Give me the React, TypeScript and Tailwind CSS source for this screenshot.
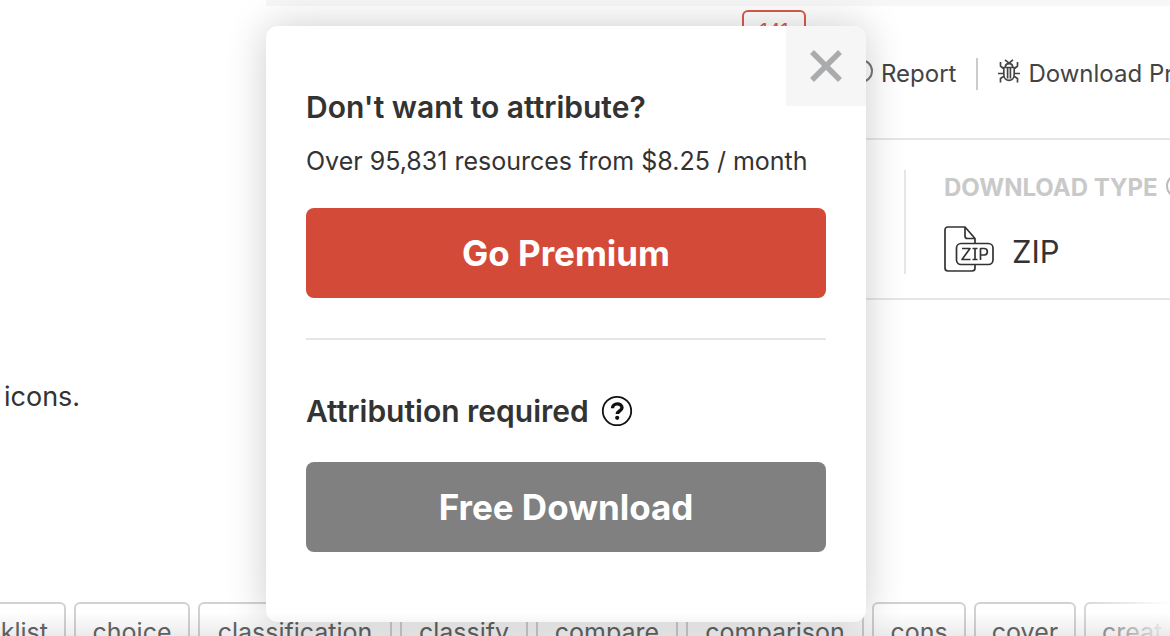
import React from "react";

const tags = [
  { label: "klist", box: "w-[66px] border-l-0 rounded-r-md justify-end pr-4" },
  { label: "choice", box: "w-[116px] rounded-md justify-center" },
  { label: "classification", box: "w-[194px] rounded-md justify-center" },
  { label: "classify", box: "w-[128px] rounded-md justify-center" },
  { label: "compare", box: "w-[142px] rounded-md justify-center" },
  { label: "comparison", box: "w-[178px] rounded-md justify-center" },
  { label: "cons", box: "w-[94px] rounded-md justify-center" },
  { label: "cover", box: "w-[102px] rounded-md justify-center" },
  { label: "creat", box: "w-[120px] rounded-md pl-4" },
];

function BugIcon() {
  return (
    <svg className="mb-1.5" width="22" height="24" viewBox="0 0 22 24" fill="none" stroke="#444" strokeWidth="1.700" strokeLinejoin="round" aria-hidden="true">
      <path d="M7 .8l4 3.400 4-3.400M7.300 8c0-4.500 7.400-4.500 7.400 0M5.800 8.500h10.400v6.700c0 8.300-10.400 8.300-10.400 0zM9.600 9v10.500M12.400 9v10.500M2.500 3v4l3.500 3M19.500 3v4L16 10M0 14.500h5.800M16.200 14.500H22M2.500 23.500v-4L6.300 17M19.500 23.500v-4L15.700 17" />
    </svg>
  );
}

function ZipIcon() {
  return (
    <svg width="50" height="46" viewBox="0 0 50 46" fill="none" stroke="#333" strokeWidth="1.7" strokeLinejoin="round" aria-hidden="true">
      <path d="M31 17v-4.500L21 1H4Q1 1 1 4v38q0 3 3 3h24q3 0 3-3v-3" />
      <path d="M21 1v9q0 2.500 2.500 2.500H31" />
      <rect x="12.500" y="17.500" width="36.500" height="21" rx="4.500" />
      <path d="M18 22.500h8L18 33.500h8.500M28.500 22.500h5M31 22.500v11M28.500 33.500h5M36.500 34V22.500h3.500c4.500 0 4.500 6.500 0 6.500h-3.500" />
    </svg>
  );
}

function HelpIcon() {
  return (
    <svg width="32" height="32" viewBox="0 0 32 32" fill="none" stroke="#111" aria-hidden="true">
      <circle cx="16" cy="16" r="14.200" strokeWidth="1.800" />
      <path d="M11.500 13.200c0-5.700 9.500-5.700 9.500-.4 0 3.200-4.700 3.200-4.700 6.200" strokeWidth="3.400" />
      <circle cx="16.200" cy="22.800" r="2.100" fill="#111" stroke="none" />
    </svg>
  );
}

function AttributionDialog() {
  return (
    <div
      role="dialog"
      aria-labelledby="premium-title"
      className="absolute left-[266px] top-[26px] w-[600px] rounded-xl bg-white px-10 pb-[70px] pt-[61px] shadow-[0_0_40px_rgba(0,0,0,0.2)]"
    >
      <button
        aria-label="Close"
        className="absolute right-0 top-0 flex size-20 items-center justify-center rounded-tr-xl bg-[#f6f6f6]"
      >
        <svg width="34" height="34" viewBox="0 0 34 34" stroke="#a9abad" strokeWidth="5.500" aria-hidden="true">
          <path d="M3 3l28 28M31 3L3 31" />
        </svg>
      </button>
      <h2 id="premium-title" className="text-[30px] font-semibold leading-10">Don't want to attribute?</h2>
      <p className="mt-[14px] whitespace-nowrap text-[25px] leading-10">Over 95,831 resources from $8.25 / month</p>
      <button className="mt-[27px] block h-[90px] w-full rounded-lg bg-[#d44a39] text-[35px] font-bold text-white">
        Go Premium
      </button>
      <hr className="mt-10 border-t-2 border-[#e6e6e6]" />
      <div className="mt-[51px] flex h-10 items-center gap-3">
        <h2 className="text-[30px] font-semibold">Attribution required</h2>
        <button aria-label="About attribution"><HelpIcon /></button>
      </div>
      <button className="mt-[31px] block h-[90px] w-full rounded-lg bg-[#808080] text-[35px] font-bold text-white">
        Free Download
      </button>
    </div>
  );
}

export default function App() {
  return (
    <div className="relative flex h-screen flex-col overflow-hidden bg-white font-['Inter','Liberation_Sans',sans-serif] text-[#333]">
      <main className="flex h-[602px] shrink-0">
        <div className="w-[266px] shrink-0 pl-1 pt-[377px]">
          <p className="text-[27px] leading-10">icons.</p>
        </div>
        <div className="min-w-0 flex-1">
          <div className="h-1.5 bg-[#f7f7f7]" />
          <div className="flex h-[134px] items-start border-b-2 border-[#e6e6e6] pt-1">
            <div className="ml-[476px] h-10 w-16 shrink-0 rounded-md border-2 border-[#d95a4c] pt-[7px] text-center text-xl leading-6 text-[#d95a4c]">
              141
            </div>
            <div className="ml-[43px] mt-11 flex h-10 shrink-0 items-center whitespace-nowrap text-2xl text-[#444]">
              <a href="#report" className="flex items-center gap-2">
                <span className="mb-1.5 size-6 rounded-full border-2 border-[#777]" />
                Report
              </a>
              <span className="mx-5 h-8 w-0.5 bg-[#ccc]" />
              <a href="#download" className="flex items-center gap-2">
                <BugIcon />
                Download Pr
              </a>
            </div>
          </div>
          <div className="flex h-40 border-b-2 border-[#e6e6e6] pl-[638px] pt-[30px]">
            <div className="h-[104px] shrink-0 border-l-2 border-[#e6e6e6] pl-[38px]">
              <div className="flex items-center gap-2 whitespace-nowrap pt-0.5 text-2xl font-bold text-[#c9c9c9]">
                DOWNLOAD TYPE
                <span className="mb-1 size-6 shrink-0 rounded-full border-2 border-[#bbb]" />
              </div>
              <div className="mt-[22px] flex items-end gap-[18px] text-[31px] leading-10">
                <ZipIcon />
                ZIP
              </div>
            </div>
          </div>
        </div>
      </main>
      <div className="relative flex gap-2 text-[25px]">
        {tags.map((tag) => (
          <a
            key={tag.label}
            href="#tag"
            className={`flex h-[60px] shrink-0 items-center border-2 border-[#d2d2d2] pt-0.5 text-[#666] ${tag.box}`}
          >
            {tag.label}
          </a>
        ))}
        <div className="absolute inset-y-0 right-0 w-24 bg-gradient-to-r from-transparent to-white" />
      </div>
      <AttributionDialog />
      <div className="pointer-events-none absolute inset-x-0 bottom-0 h-6 bg-gradient-to-b from-transparent to-black/8" />
    </div>
  );
}
